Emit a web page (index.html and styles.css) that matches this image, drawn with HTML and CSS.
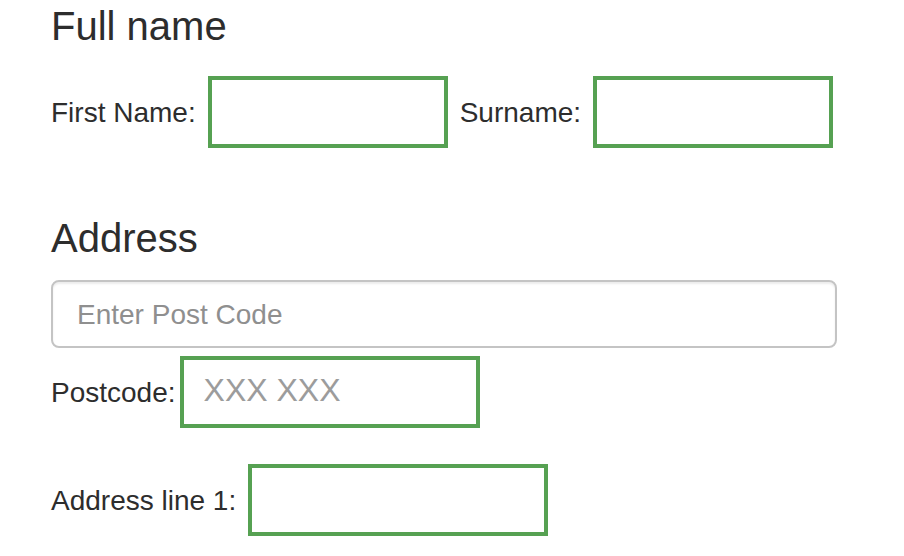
FILE: index.html
```html
<!DOCTYPE html>
<html lang="en">
<head>
<meta charset="utf-8">
<title>Your details</title>
<link rel="stylesheet" href="styles.css">
</head>
<body>
<form class="form">
  <section class="group">
    <h2 class="heading">Full name</h2>
    <div class="row">
      <label for="first">First Name:</label>
      <input class="field" id="first" type="text">
      <label for="surname">Surname:</label>
      <input class="field" id="surname" type="text">
    </div>
  </section>
  <section class="group">
    <h2 class="heading">Address</h2>
    <input class="search" type="text" placeholder="Enter Post Code" aria-label="Enter Post Code">
    <div class="row row-tight">
      <label for="postcode">Postcode:</label>
      <input class="field field-wide" id="postcode" type="text" placeholder="XXX XXX">
    </div>
    <div class="row row-last">
      <label for="line1">Address line 1:</label>
      <input class="field field-wide" id="line1" type="text">
    </div>
  </section>
</form>
</body>
</html>
```
FILE: styles.css
```css
* { box-sizing: border-box; }
body {
  margin: 0;
  background: #fff;
  color: #2d2d2d;
  font: 28px/40px "Liberation Sans", Arial, sans-serif;
}
.form { padding: 4px 67px 20px 51px; }
.group + .group { margin-top: 68px; }
.heading {
  margin: 0;
  font-size: 40px;
  line-height: 44px;
  font-weight: 400;
}
.row {
  display: flex;
  align-items: center;
  gap: 12px;
  margin-top: 28px;
}
.row label { padding-top: 2px; }
.field {
  width: 240px;
  height: 72px;
  padding: 0 20px 4px;
  border: 4px solid #56a152;
  background: #fff;
  font: inherit;
  font-size: 32px;
}
.field-wide { width: 300px; }
.search {
  display: block;
  width: 100%;
  height: 68px;
  margin-top: 20px;
  padding: 2px 24px 0;
  border: 2px solid #c4c4c4;
  border-radius: 8px;
  box-shadow: inset 0 2px 2px rgba(0, 0, 0, 0.075);
  font: inherit;
}
.row-tight { gap: 4px; margin-top: 8px; }
.row-last { margin-top: 36px; }
.search::placeholder { color: #8f8f8f; opacity: 1; }
.field::placeholder { color: #9c9c9c; opacity: 1; }
```
